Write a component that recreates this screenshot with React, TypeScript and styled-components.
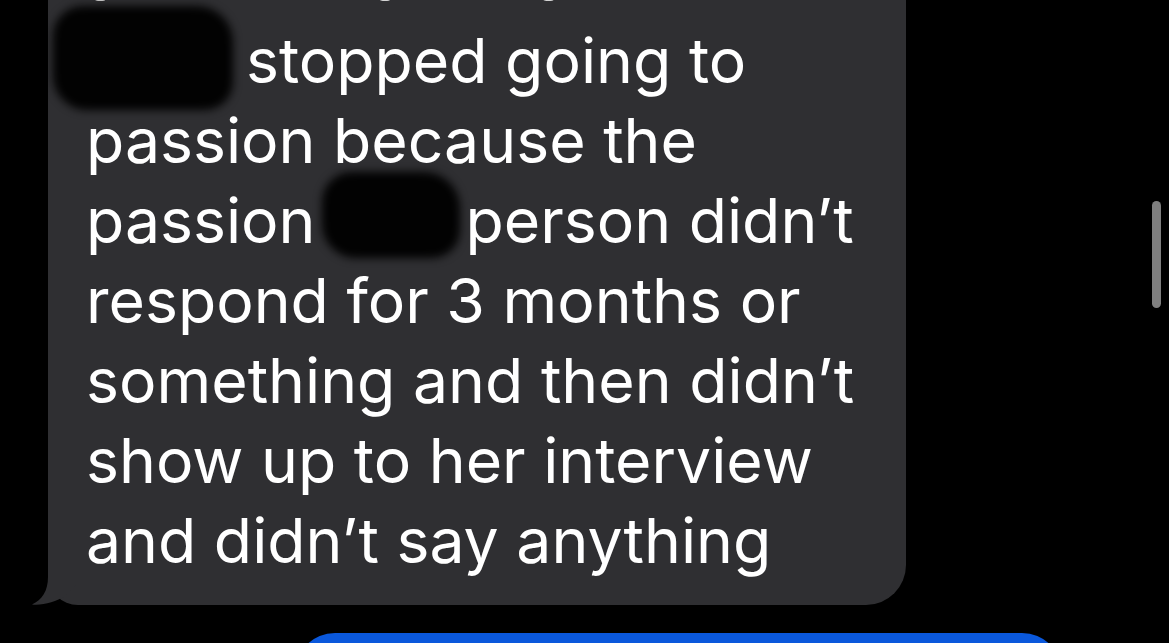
import styled, { createGlobalStyle } from 'styled-components';

const GlobalStyle = createGlobalStyle`
  html, body {
    margin: 0;
    padding: 0;
    background: #000;
    height: 643px;
    overflow: hidden;
  }
`

const Screen = styled.main`
  position: relative;
  width: 1169px;
  height: 643px;
  overflow: hidden;
  background: #000;
  display: flex;
  flex-direction: column;
  font-family: Inter, "Liberation Sans", sans-serif;
`

const Thread = styled.section`
  display: flex;
  flex-direction: column;
  gap: 28px;
  margin-top: -80px;
`

const Row = styled.div<{ $mine?: boolean }>`
  display: flex;
  justify-content: ${p => (p.$mine ? 'flex-end' : 'flex-start')};
  padding: ${p => (p.$mine ? '0 107px 0 0' : '0 0 0 48px')};
`

const Bubble = styled.div<{ $mine?: boolean }>`
  position: relative;
  box-sizing: border-box;
  width: ${p => (p.$mine ? '767px' : '858px')};
  min-height: 80px;
  padding: ${p => (p.$mine ? '0' : '20px 20px 25px 38px')};
  border-radius: 40px;
  border-bottom-left-radius: ${p => (p.$mine ? '40px' : '30px')};
  background: ${p => (p.$mine ? '#0a58dc' : '#2f2f32')};
  color: #fff;
`

const Line = styled.div<{ $lift?: number }>`
  font-size: 62.5px;
  line-height: 80px;
  white-space: nowrap;
  margin-top: ${p => (p.$lift ? -p.$lift : 0)}px;
  margin-bottom: ${p => (p.$lift ? p.$lift : 0)}px;
`

const Gap = styled.span<{ $w: number }>`
  display: inline-block;
  width: ${p => p.$w}px;
`

const Redaction = styled.div`
  position: absolute;
  background: #020202;
  border-radius: 30px 36px 28px 34px;
  filter: blur(4px);
`

const Tail = styled.svg`
  position: absolute;
  left: -16px;
  bottom: 0;
  width: 48px;
  height: 40px;
`

const Scrollbar = styled.div`
  position: absolute;
  left: 1152px;
  top: 201px;
  width: 9px;
  height: 107px;
  border-radius: 5px;
  background: #7f7f7f;
`

const App: React.FC = () => {
  return (
    <Screen>
      <GlobalStyle />
      <Thread>
        <Row>
          <Bubble>
            <Line $lift={3}>and she said that her</Line>
            <Line><Gap $w={160} />stopped going to</Line>
            <Line>passion because the</Line>
            <Line>passion<Gap $w={150} />person didn’t</Line>
            <Line>respond for 3 months or</Line>
            <Line>something and then didn’t</Line>
            <Line>show up to her interview</Line>
            <Line>and didn’t say anything</Line>
            <Redaction style={{ left: 5, top: 86, width: 180, height: 104 }} />
            <Redaction style={{ left: 274, top: 252, width: 138, height: 86 }} />
            <Tail viewBox="0 0 48 40">
              <path
                d="M16 0 L16 12 C16 26 10 35 0 39.5 C11 40.5 24 37 33 31 L44 20 L44 0 Z"
                fill="#2f2f32"
              />
            </Tail>
          </Bubble>
        </Row>
        <Row $mine>
          <Bubble $mine />
        </Row>
      </Thread>
      <Scrollbar />
    </Screen>
  );
}

export default App;
